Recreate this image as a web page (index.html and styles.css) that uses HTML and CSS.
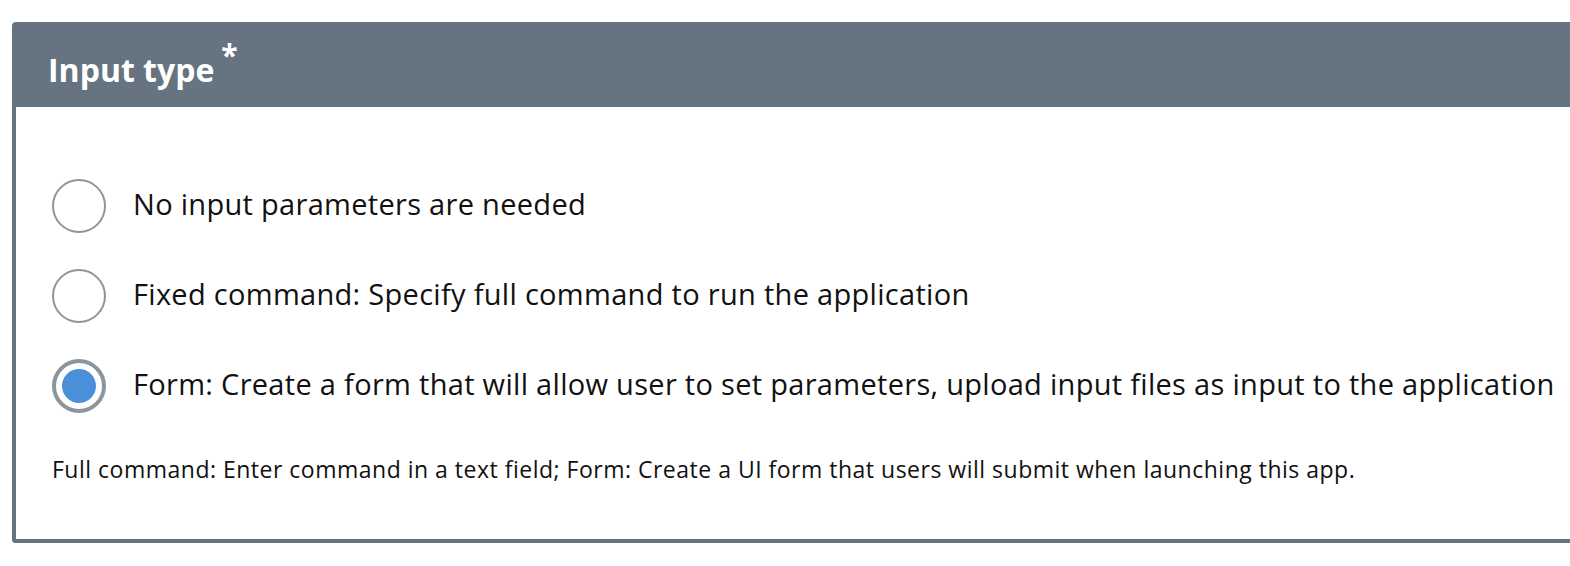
FILE: index.html
```html
<!DOCTYPE html>
<html>
<head>
<meta charset="utf-8">
<link rel="stylesheet" href="styles.css">
</head>
<body>
<div class="card">
  <div class="card-header">
    <h2 class="title">Input type<span class="req">*</span></h2>
  </div>
  <div class="card-body">
    <div class="options">
      <label class="option">
        <span class="radio"></span>
        <span class="label">No input parameters are needed</span>
      </label>
      <label class="option">
        <span class="radio"></span>
        <span class="label">Fixed command: Specify full command to run the application</span>
      </label>
      <label class="option">
        <span class="radio checked"></span>
        <span class="label">Form: Create a form that will allow user to set parameters, upload input files as input to the application</span>
      </label>
    </div>
    <p class="help">Full command: Enter command in a text field; Form: Create a UI form that users will submit when launching this app.</p>
  </div>
</div>
</body>
</html>
```

FILE: styles.css
```css
html, body {
  margin: 0;
  padding: 0;
  background: #ffffff;
  overflow: hidden;
}
body {
  font-family: "Open Sans", "Lato", sans-serif;
  color: #111;
}
.card {
  margin: 22px 0 0 12px;
  width: 1600px;
}
.card-header {
  background: #657480;
  height: 85px;
  border-radius: 4px 0 0 0;
  display: flex;
  align-items: center;
  padding-left: 36px;
  box-sizing: border-box;
  color: #fff;
}
.title {
  margin: -4px 0 0 0;
  font-weight: 700;
  font-size: 32px;
  line-height: 40px;
}
.req {
  font-size: 30px;
  margin-left: 7px;
  vertical-align: 16px;
}
.card-body {
  border-left: 4px solid #657480;
  border-bottom: 4px solid #657480;
  border-radius: 0 0 0 4px;
  height: 436px;
  box-sizing: border-box;
  padding: 72px 0 0 36px;
}
.options {
  display: flex;
  flex-direction: column;
  gap: 36px;
}
.option {
  display: flex;
  align-items: center;
  gap: 27px;
}
.radio {
  width: 54px;
  height: 54px;
  box-sizing: border-box;
  border: 2px solid #8b959e;
  border-radius: 50%;
  flex: none;
  display: flex;
  align-items: center;
  justify-content: center;
}
.radio.checked {
  border: 4px solid #8b959e;
}
.radio.checked::after {
  content: "";
  width: 34px;
  height: 34px;
  border-radius: 50%;
  background: #4a90d9;
}
.label {
  font-size: 29px;
  letter-spacing: 0.3px;
  line-height: 36px;
  margin-top: -4px;
  color: #111;
}
.help {
  margin: 40px 0 0 0;
  font-size: 23px;
  letter-spacing: 0.5px;
  color: #111;
}
```
